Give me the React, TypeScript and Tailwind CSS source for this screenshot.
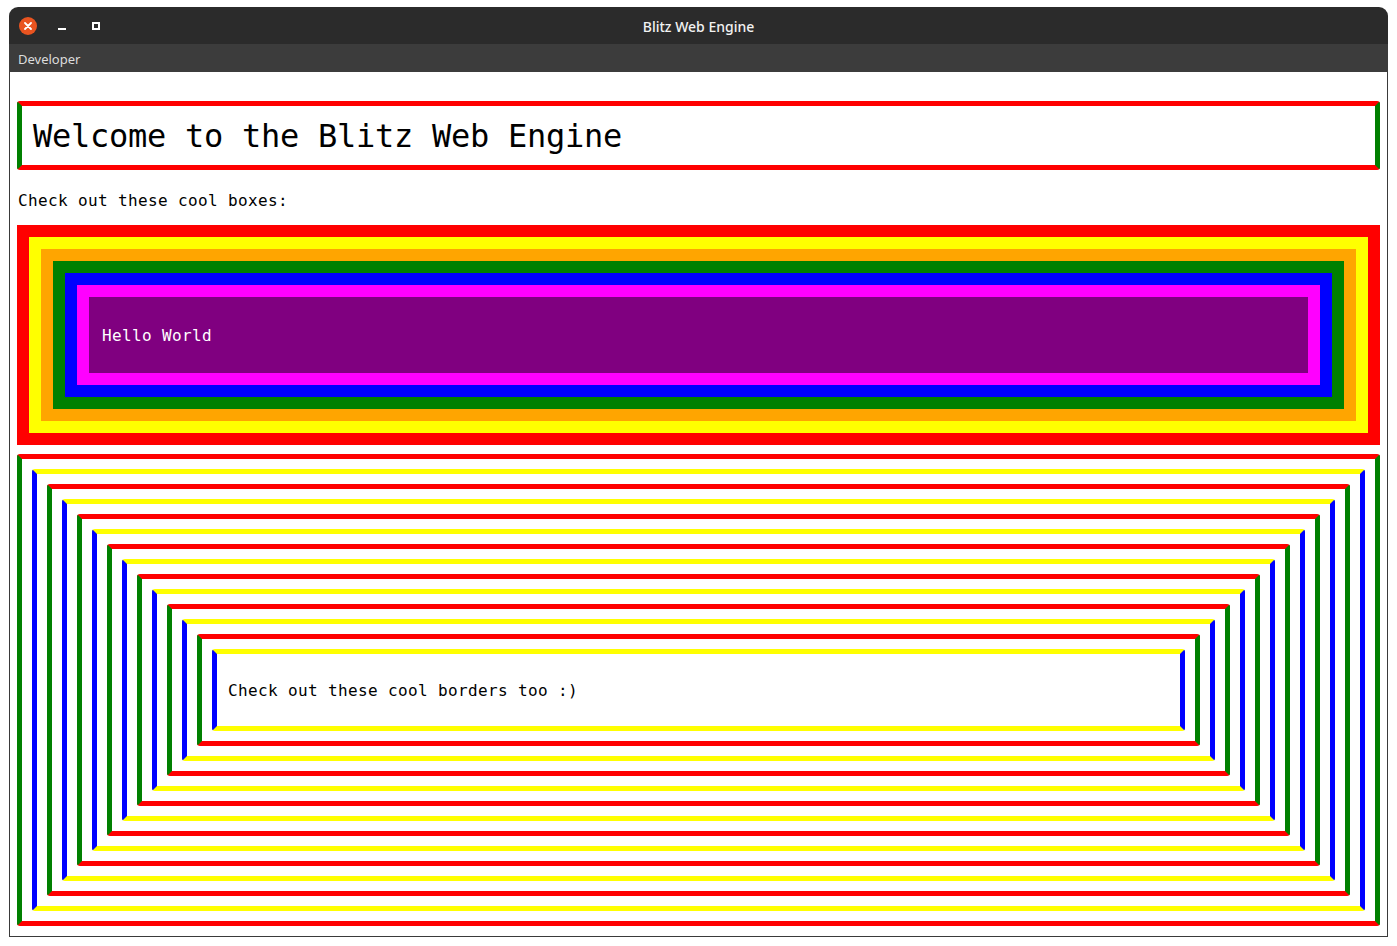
const mono = "font-['DejaVu_Sans_Mono',monospace]"

function Nested({ level, max }: { level: number; max: number }) {
  const odd = level % 2 === 1
  const colors = odd
    ? 'border-y-[#ffff00] border-x-[#0000ff]'
    : 'border-y-[#ff0000] border-x-[#008000]'
  return (
    <div className={`border-[5px] rounded-[3px] p-[10px] ${colors}`}>
      {level < max ? (
        <Nested level={level + 1} max={max} />
      ) : (
        <div className="h-[52px] flex items-center pt-[1px] pl-[1px]">
          <span className={`${mono} text-[16px] tracking-[0.367px] text-black`}>
            Check out these cool borders too :)
          </span>
        </div>
      )}
    </div>
  )
}

export default function App() {
  return (
    <div className="w-[1397px] h-[946px] bg-white pt-[7px] pl-[9px]">
      <div className="w-[1379px] h-[930px] rounded-t-[9px] overflow-hidden flex flex-col bg-[#2b2b2b]">
        {/* title bar */}
        <div className="h-[37px] shrink-0 grid grid-cols-[1fr_auto_1fr] items-center">
          <div className="flex items-center pl-[10px]">
            <div className="w-[18px] h-[18px] rounded-full bg-[#e95420] flex items-center justify-center">
              <svg width="8" height="8" viewBox="0 0 8 8">
                <path d="M1 1L7 7M7 1L1 7" stroke="white" strokeWidth="1.8" strokeLinecap="round" />
              </svg>
            </div>
            <div className="ml-[21px] mt-[6px] w-[8px] h-[2px] bg-white" />
            <div className="ml-[26px] w-[8px] h-[8px] border-2 border-white" />
          </div>
          <div className="pt-[2px] font-['Noto_Sans',sans-serif] text-[14px] font-medium text-[#f2f2f2]">
            Blitz Web Engine
          </div>
          <div />
        </div>

        {/* menu bar */}
        <div className="h-[28px] shrink-0 bg-[#3c3c3c] flex items-center pl-[9px] pt-[3px]">
          <span className="font-['Noto_Sans',sans-serif] text-[13px] text-[#dcdcdc]">Developer</span>
        </div>

        {/* page */}
        <div className="flex-1 bg-white border-x border-b border-[#3a3a3a] pl-[7px] pr-[7px] flex flex-col">
          <div className="mt-[29px] h-[69px] border-[5px] border-y-[#ff0000] border-x-[#008000] rounded-[3px] flex items-center pl-[11px]">
            <h1 className={`${mono} text-[32px] tracking-[-0.266px] text-black leading-none`}>
              Welcome to the Blitz Web Engine
            </h1>
          </div>

          <p className={`${mono} mt-[21px] h-[19px] leading-[19px] pl-[1px] text-[16px] tracking-[0.367px] text-black`}>
            Check out these cool boxes:
          </p>

          <div className="mt-[15px] border-[12px] border-[#ff0000]">
            <div className="border-[12px] border-[#ffff00]">
              <div className="border-[12px] border-[#ffa500]">
                <div className="border-[12px] border-[#008000]">
                  <div className="border-[12px] border-[#0000ff]">
                    <div className="border-[12px] border-[#ff00ff]">
                      <div className="h-[76px] bg-[#800080] flex items-center pl-[13px] pt-[2px]">
                        <span className={`${mono} text-[16px] tracking-[0.367px] text-white`}>
                          Hello World
                        </span>
                      </div>
                    </div>
                  </div>
                </div>
              </div>
            </div>
          </div>

          <div className="mt-[9px]">
            <Nested level={0} max={13} />
          </div>
        </div>
      </div>
    </div>
  )
}
